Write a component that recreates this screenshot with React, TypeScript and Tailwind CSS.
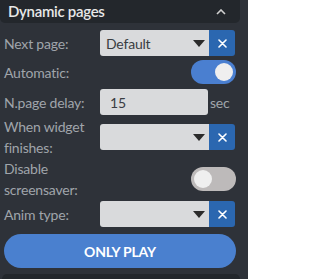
import React from "react";

function Arrow() {
  return (
    <svg width="12" height="7" viewBox="0 0 12 7" className="block">
      <polygon points="0,0 12,0 6,7" fill="#2b2b2b" />
    </svg>
  );
}

function XIcon() {
  return (
    <svg width="9" height="9" viewBox="0 0 9 9" className="block">
      <path d="M1 1 L8 8 M8 1 L1 8" stroke="#ffffff" strokeWidth="1.6" strokeLinecap="round" />
    </svg>
  );
}

function Select({ value }: { value?: string }) {
  return (
    <div className="flex h-[26px] w-[135px] overflow-hidden rounded-[3px]">
      <div className="flex flex-1 items-center justify-between bg-[#d9dadc] pl-[6px] pr-[4px] text-[14px] text-[#3a3d42]">
        <span>{value ?? ""}</span>
        <Arrow />
      </div>
      <div className="flex w-[26px] items-center justify-center bg-[#2b67b0]">
        <XIcon />
      </div>
    </div>
  );
}

function Toggle({ on }: { on: boolean }) {
  return (
    <div
      className={
        on
          ? "flex h-[24px] w-[45px] items-center justify-end rounded-full bg-[#4a7fd0] px-[3px]"
          : "flex h-[24px] w-[45px] items-center justify-start rounded-full bg-[#bdbaba] px-[3px]"
      }
    >
      <div className="h-[18px] w-[18px] rounded-full bg-[#efefef]" />
    </div>
  );
}

export default function App() {
  return (
    <div
      className="relative h-[279px] w-[248px] overflow-hidden bg-[#2e3239] text-[14px] tracking-[-0.2px] text-[#a0a5ab]"
      style={{ fontFamily: "Lato, 'Open Sans', sans-serif" }}
    >
      <div className="flex h-[23px] w-[240px] items-center justify-between rounded-b-[5px] bg-[#23272c] pl-[8px] pr-[14px]">
        <span className="text-[15px] font-semibold tracking-[-0.3px] text-[#e8e8e8]">Dynamic pages</span>
        <svg width="10" height="6" viewBox="0 0 10 6" className="block">
          <path d="M1 5 L5 1 L9 5" stroke="#d0d0d0" strokeWidth="1.6" fill="none" />
        </svg>
      </div>

      <div className="flex flex-col pl-[4px]">
        <div className="mt-[7px] flex h-[26px] items-center">
          <span className="w-[96px]">Next page:</span>
          <Select value="Default" />
        </div>
        <div className="mt-[4px] flex h-[24px] items-center">
          <span className="flex-1">Automatic:</span>
          <div className="mr-[12px]">
            <Toggle on={true} />
          </div>
        </div>
        <div className="mt-[5px] flex h-[26px] items-center">
          <span className="w-[96px]">N.page delay:</span>
          <div className="flex h-[26px] w-[108px] items-center rounded-[3px] bg-[#d9dadc] pl-[10px] text-[14px] text-[#3a3d42]">
            15
          </div>
          <span className="ml-[2px]">sec</span>
        </div>
        <div className="mt-[1px] flex h-[42px] items-center">
          <span className="w-[96px] leading-[21px]">
            When widget
            <br />
            finishes:
          </span>
          <Select />
        </div>
        <div className="flex h-[42px] items-center">
          <span className="flex-1 leading-[21px]">
            Disable
            <br />
            screensaver:
          </span>
          <div className="mr-[12px]">
            <Toggle on={false} />
          </div>
        </div>
        <div className="mt-[1px] flex h-[26px] items-center">
          <span className="w-[96px]">Anim type:</span>
          <Select />
        </div>
        <div className="mt-[7px] flex h-[34px] w-[232px] items-center justify-center rounded-full bg-[#4a80cf] text-[14px] font-bold text-white">
          ONLY PLAY
        </div>
      </div>

      <div className="absolute left-[2px] top-[274px] h-[10px] w-[238px] rounded-t-[5px] bg-[#23272c]" />
    </div>
  );
}
